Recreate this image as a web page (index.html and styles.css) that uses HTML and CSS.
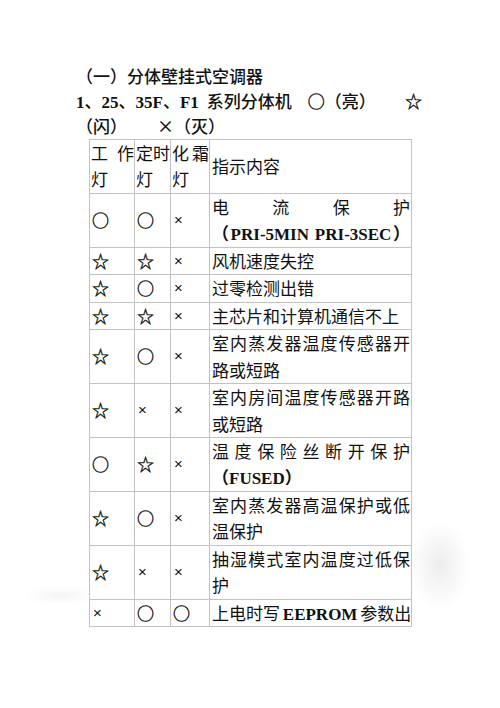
FILE: index.html
```html
<!DOCTYPE html>
<html lang="zh-CN">
<head>
<meta charset="utf-8">
<title>分体壁挂式空调器</title>
<link rel="stylesheet" href="styles.css">
</head>
<body>
<div class="page">
  <p class="line h1">（一）分体壁挂式空调器</p>
  <p class="line h2">
    <span class="left"><span class="lat">1</span>、<span class="lat">25</span>、<span class="lat">35F</span>、<span class="lat">F1</span><span class="g1">系列分体机</span><span class="g2"><span class="o">○</span>（亮）</span></span>
    <span class="star">☆</span>
  </p>
  <p class="line h3">（闪）<span class="g3">×（灭）</span></p>
  <table class="tbl">
    <colgroup>
      <col class="c1"><col class="c2"><col class="c3"><col class="c4">
    </colgroup>
    <tr class="head">
      <td class="hc">工作灯</td>
      <td class="hc">定时灯</td>
      <td class="hc">化霜灯</td>
      <td class="txt">指示内容</td>
    </tr>
    <tr>
      <td class="sym">○</td><td class="sym">○</td><td class="sym x">×</td>
      <td class="txt jall">电流保护<br><span class="lat">（PRI-5MIN PRI-3SEC）</span></td>
    </tr>
    <tr>
      <td class="sym">☆</td><td class="sym">☆</td><td class="sym x">×</td>
      <td class="txt">风机速度失控</td>
    </tr>
    <tr>
      <td class="sym">☆</td><td class="sym">○</td><td class="sym x">×</td>
      <td class="txt">过零检测出错</td>
    </tr>
    <tr>
      <td class="sym">☆</td><td class="sym">☆</td><td class="sym x">×</td>
      <td class="txt">主芯片和计算机通信不上</td>
    </tr>
    <tr>
      <td class="sym">☆</td><td class="sym">○</td><td class="sym x">×</td>
      <td class="txt">室内蒸发器温度传感器开路或短路</td>
    </tr>
    <tr>
      <td class="sym">☆</td><td class="sym x">×</td><td class="sym x">×</td>
      <td class="txt">室内房间温度传感器开路或短路</td>
    </tr>
    <tr>
      <td class="sym">○</td><td class="sym">☆</td><td class="sym x">×</td>
      <td class="txt">温度保险丝断开保护<span class="lat">（FUSED）</span></td>
    </tr>
    <tr>
      <td class="sym">☆</td><td class="sym">○</td><td class="sym x">×</td>
      <td class="txt">室内蒸发器高温保护或低温保护</td>
    </tr>
    <tr>
      <td class="sym">☆</td><td class="sym x">×</td><td class="sym x">×</td>
      <td class="txt">抽湿模式室内温度过低保护</td>
    </tr>
    <tr>
      <td class="sym x">×</td><td class="sym">○</td><td class="sym">○</td>
      <td class="txt nowrap">上电时写 <span class="lat">EEPROM</span> 参数出</td>
    </tr>
  </table>
</div>
</body>
</html>
```
FILE: styles.css
```css
html, body {
  margin: 0;
  padding: 0;
}
body {
  background-color: #ffffff;
  background-image:
    radial-gradient(ellipse 30px 45px at 440px 565px, rgba(0,0,0,0.07), rgba(0,0,0,0) 100%),
    radial-gradient(ellipse 40px 10px at 60px 595px, rgba(0,0,0,0.04), rgba(0,0,0,0) 100%);
  background-repeat: no-repeat;
  font-family: "Noto Sans CJK SC", "Noto Sans", sans-serif;
  font-size: 17px;
  color: #111;
}
.page {
  padding: 63px 0 0 76px;
}
.line {
  margin: 0;
  line-height: 25px;
  white-space: nowrap;
}
.h1, .h2, .h3 {
  font-weight: 500;
}
.h2 {
  display: flex;
  justify-content: space-between;
  width: 346px;
}
.lat {
  font-family: "Liberation Serif", "Noto Sans CJK SC", serif;
  font-weight: bold;
  line-height: 0;
}
.g1 { margin-left: 8px; }
.g2 { margin-left: 16px; }
.g3 { margin-left: 30px; }
.star, .o {
  font-weight: 400;
  -webkit-text-stroke: 0.4px #111;
}

.tbl {
  margin: 1px 0 0 13px;
  border-collapse: collapse;
  table-layout: fixed;
  width: 322px;
}
.c1 { width: 45px; }
.c2 { width: 36px; }
.c3 { width: 39px; }
.c4 { width: 202px; }
.tbl td {
  border: 1px solid #c2c2c2;
  line-height: 26.45px;
  vertical-align: middle;
  padding: 0 1px 0 2px;
}
.tbl td.hc {
  padding: 0 0 0 1px;
  text-align: justify;
}
.tbl td.txt {
  text-align: justify;
  padding: 0 1px 0 2px;
}
.tbl td.jall {
  text-align-last: justify;
}
.tbl td.nowrap {
  white-space: nowrap;
  word-spacing: -1px;
}
.sym {
  text-align: left;
  -webkit-text-stroke: 0.4px #111;
}
.sym.x {
  font-family: "Liberation Sans", sans-serif;
  font-size: 15px;
  padding-left: 3px;
  -webkit-text-stroke: 0;
}
```
